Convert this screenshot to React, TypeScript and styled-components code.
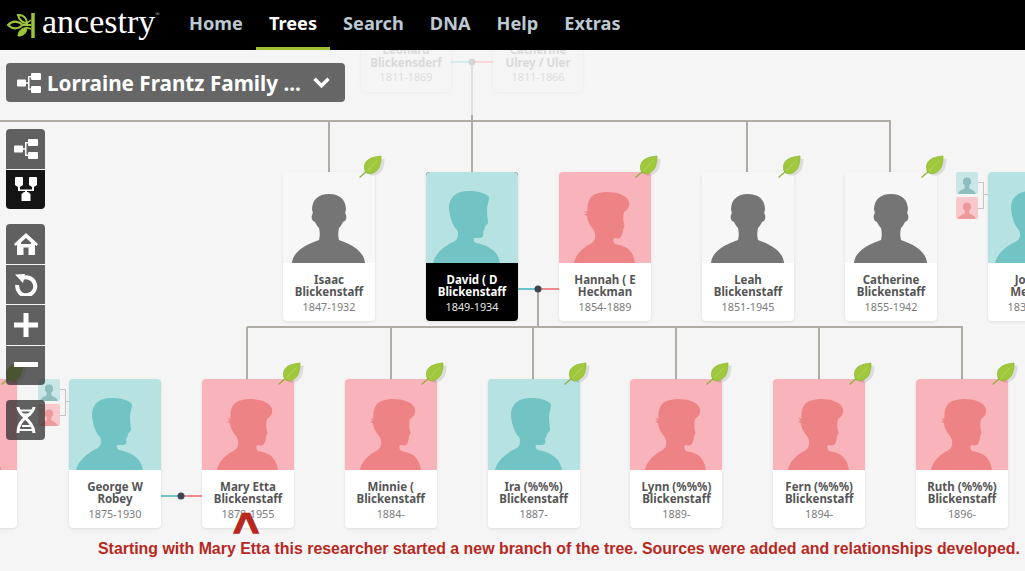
import React from "react";
import styled, { createGlobalStyle } from "styled-components";

const GlobalStyle = createGlobalStyle`
  html, body { margin: 0; padding: 0; background: #f5f5f5; }
  body { font-family: "Noto Sans", "Open Sans", sans-serif; }
`;

const Page = styled.div`
  width: 1025px;
  height: 571px;
  overflow: hidden;
  display: flex;
  flex-direction: column;
`;

// header
const Header = styled.header`
  height: 50px;
  flex: none;
  background: #000;
  display: flex;
  align-items: stretch;
  padding-left: 7px;
  position: relative;
  z-index: 5;
`;

const Logo = styled.div`
  display: flex;
  align-items: center;
  width: 169px;
  gap: 5px;
`;

const LogoWord = styled.span`
  font-family: "Liberation Serif", serif;
  font-size: 34px;
  line-height: 1;
  color: #fff;
  margin-top: -7px;
  sup {
    font-size: 6px;
    vertical-align: 17px;
    line-height: 0;
    color: #ccc;
  }
`;

const Nav = styled.nav`
  display: flex;
`;

const NavItem = styled.a<{ $active?: boolean }>`
  font-family: "Noto Sans", sans-serif;
  font-weight: 700;
  font-size: 18.2px;
  line-height: 46px;
  height: 47px;
  padding: 0 13px;
  color: ${(p) => (p.$active ? "#fff" : "#bcc8d2")};
  border-bottom: 3px solid ${(p) => (p.$active ? "#9cbe30" : "transparent")};
`;

// free canvas of the tree
const Canvas = styled.main`
  position: relative;
  flex: 1;
  overflow: hidden;
  background: #f5f5f5;
`;

const Connectors = styled.svg`
  position: absolute;
  left: 0;
  top: 0;
`;

const TreeRow = styled.div<{ $x: number; $y: number; $gap: number }>`
  position: absolute;
  left: ${(p) => p.$x}px;
  top: ${(p) => p.$y - 50}px;
  display: flex;
  gap: ${(p) => p.$gap}px;
`;

const Card = styled.div<{ $selected?: boolean; $before?: number }>`
  position: relative;
  flex: none;
  width: 92px;
  height: 149px;
  margin-left: ${(p) => p.$before ?? 0}px;
  border-radius: 4px;
  background: ${(p) => (p.$selected ? "#000" : "#fff")};
  box-shadow: 0 1px 3px rgba(0, 0, 0, 0.1);
  display: flex;
  flex-direction: column;
`;

const Photo = styled.div<{ $g: Gender }>`
  height: 91px;
  flex: none;
  display: flex;
  border-radius: 4px 4px 0 0;
  overflow: hidden;
  background: ${(p) => (p.$g === "m" ? "#b6e2e1" : p.$g === "f" ? "#f9b4bb" : "#f7f7f7")};
  svg { display: block; }
`;

const Info = styled.div<{ $selected?: boolean }>`
  flex: 1;
  padding-top: 10.5px;
  text-align: center;
  color: ${(p) => (p.$selected ? "#fff" : "#555")};
  white-space: nowrap;
`;

const Name = styled.div`
  font-family: "Noto Sans", sans-serif;
  font-weight: 700;
  font-size: 11.5px;
  line-height: 12.5px;
`;

const Years = styled.div<{ $selected?: boolean }>`
  font-family: "Noto Sans", sans-serif;
  font-size: 10.8px;
  line-height: 15px;
  color: ${(p) => (p.$selected ? "#e6e6e6" : "#7b7b7b")};
`;

const GhostCard = styled.div`
  flex: none;
  width: 90px;
  height: 52px;
  border-radius: 4px;
  background: #f5f5f5;
  box-shadow: 0 0 3px rgba(0, 0, 0, 0.06);
  text-align: center;
  color: #dadada;
  padding-top: 4px;
  box-sizing: border-box;
  white-space: nowrap;
`;

const GhostYears = styled(Years)`
  color: #dedede;
`;

const LeafMark = styled.svg`
  position: absolute;
  right: -12px;
  top: -17px;
`;

const SideParents = styled.div<{ $x: number; $y: number }>`
  position: absolute;
  left: ${(p) => p.$x}px;
  top: ${(p) => p.$y - 50}px;
  display: flex;
  align-items: center;
`;

const MiniStack = styled.div`
  display: flex;
  flex-direction: column;
  gap: 3px;
`;

const MiniParent = styled.div<{ $g: Gender }>`
  width: 22px;
  height: 22px;
  border-radius: 2px;
  overflow: hidden;
  background: ${(p) => (p.$g === "m" ? "#c8e6e6" : "#f8c8cc")};
  svg { display: block; }
`;

const Bracket = styled.div`
  position: relative;
  width: 5px;
  height: 25px;
  border: 1px solid #c4c4c0;
  border-left: none;
  &::after {
    content: "";
    position: absolute;
    left: 5px;
    top: 11px;
    width: 5px;
    height: 1px;
    background: #c4c4c0;
  }
`;

// overlay controls
const TreePicker = styled.div`
  position: absolute;
  left: 6px;
  top: 13px;
  width: 339px;
  height: 39px;
  box-sizing: border-box;
  padding: 0 15px 0 11px;
  border-radius: 4px;
  background: #666;
  color: #fff;
  display: flex;
  align-items: center;
  z-index: 3;
`;

const PickerTitle = styled.span`
  flex: 1;
  margin-left: 6px;
  font-family: "Noto Sans", sans-serif;
  font-weight: 700;
  font-size: 20.7px;
  white-space: nowrap;
`;

const Tools = styled.div`
  position: absolute;
  left: 6px;
  top: 79px;
  width: 39px;
  display: flex;
  flex-direction: column;
  z-index: 3;
`;

const ToolGroup = styled.div`
  display: flex;
  flex-direction: column;
  gap: 1px;
  margin-bottom: 15px;
  border-radius: 4px;
  overflow: hidden;
`;

const Tool = styled.button<{ $active?: boolean }>`
  width: 39px;
  height: 39.5px;
  padding: 0;
  border: none;
  display: flex;
  align-items: center;
  justify-content: center;
  background: ${(p) => (p.$active ? "#141414" : "rgba(45, 45, 45, 0.75)")};
  color: #fff;
`;

const Caret = styled.div`
  position: absolute;
  left: 233px;
  top: 456px;
  font-family: "Liberation Sans", Arial, sans-serif;
  font-weight: 700;
  font-size: 45px;
  line-height: 45px;
  color: #b8281e;
  -webkit-text-stroke: 1.5px #b8281e;
  z-index: 2;
`;

const Caption = styled.div`
  position: absolute;
  left: 98px;
  top: 490px;
  font-family: "Liberation Sans", Arial, sans-serif;
  font-weight: 700;
  font-size: 15.9px;
  line-height: 18px;
  color: #b8281e;
  white-space: nowrap;
  z-index: 2;
`;

type Gender = "m" | "f" | "u";

const MALE =
  "M7 91C9 82 18 74 29 69C32 67 33 62 31 58C26 53 23 43 23 34C24 24 32 19 42 19C50 19 58 20 63 25C63 30 61 33 61 38C61 44 62 48 62 51C61 53 59 54 59 55C59 57 58 58 57 60C58 64 57 66 53 66L48 66C47 68 48 70 50 71C57 72 64 75 69 80C72 83 73 87 74 91Z";
const FEMALE =
  "M15 91C16 85 20 79 29 73C34 71 37 68 36 62C36 59 33 56 31 53C29 50 28 46 28 44L25 42.500L28 41.500L25 39.500L28.500 39.500C28 34 29 28 33 24C37 21 43 20 48 20C58 20 68 23 70 30C71 35 68 38 65 40C64 44 64 48 65 52C66 54 65 56 64 57C64 60 63 64 61 66C59 67 57 66 55 66C54 68 54 70 56 72C62 73 68 75 71 79C74 82 75 86 76 91Z";
const UNKNOWN =
  "M9 91C10 81 19 74 36 68C37 64 37 60 36 56C34 54 33 52 32 50C29 49 28 46 29 43C30 41 30 40 29 38C29 28 35 22 46 22C57 22 63 28 63 38C62 40 62 41 63 43C64 46 63 49 60 50C59 52 58 54 56 56C55 60 55 64 56 68C73 74 81 81 82 91Z";

const Silhouette = ({ g }: { g: Gender }) => (
  <svg width={92} height={91} viewBox="0 0 92 91">
    <path
      d={g === "m" ? MALE : g === "f" ? FEMALE : UNKNOWN}
      fill={g === "m" ? "#72c3c3" : g === "f" ? "#ee8385" : "#757575"}
    />
  </svg>
);

const MiniSilhouette = ({ g }: { g: Gender }) => (
  <svg width="22" height="22" viewBox="0 0 92 91">
    <path d={UNKNOWN} fill={g === "m" ? "#8fbcbc" : "#ee9a9c"} />
  </svg>
);

const Leaf = () => (
  <LeafMark width="28" height="25" viewBox="0 0 28 25">
    <path d="M23 2C14 2.500 7 4 6 11C5.500 15 7 18 9 19C15 20 21 16 22 10C23 7 23 4 23 2Z" fill="#000" opacity="0.1" transform="translate(2.500 1.500)" />
    <path d="M22 1C13 2 6.500 4 5.500 11C5 15 6.500 17.500 8.500 18.500C14.500 19.500 20 15.500 21 9.500C22 6.500 22 4 22 1Z" fill="#a0c83c" stroke="#8cb82c" strokeWidth="0.7" />
    <path d="M8.500 16C12 12 15 8.500 18.500 5.500" stroke="#b8da68" strokeWidth="0.8" fill="none" />
    <path d="M0.500 22.500L7.500 16.500" stroke="#8fb23a" strokeWidth="1.300" fill="none" />
  </LeafMark>
);

const NetworkIcon = () => (
  <svg width="24" height="20" viewBox="0 0 24 20" fill="#fff">
    <rect x="0" y="6.500" width="9" height="7" rx="1" />
    <rect x="14" y="0" width="10" height="7" rx="1" />
    <rect x="14" y="13" width="10" height="7" rx="1" />
    <path d="M9 9.200H11V3H14V4.400H12.500V15.600H14V17H11V10.800H9Z" />
  </svg>
);

const PedigreeIcon = () => (
  <svg width="22" height="24" viewBox="0 0 22 24" fill="#fff">
    <path d="M1 0H7A1 1 0 0 1 8 1V8L5 10H3L0 8V1A1 1 0 0 1 1 0Z" />
    <path d="M15 0H21A1 1 0 0 1 22 1V8L19 10H17L14 8V1A1 1 0 0 1 15 0Z" />
    <path d="M9 15H13L15.500 17V24H6.500V17Z" />
    <path d="M3 10H5V12.500H17V10H19V14H12V15H10V14H3Z" />
  </svg>
);

const HomeIcon = () => (
  <svg width="24" height="22" viewBox="0 0 24 22" fill="#fff">
    <path d="M12 0L24 11L22.500 13L21 11.700V22H14.500V14.500H9.500V22H3V11.700L1.500 13L0 11L12 0ZM12 5L7 9.500V11H17V9.500Z" fillRule="evenodd" />
  </svg>
);

const ResetIcon = () => (
  <svg width="24" height="24" viewBox="0 0 24 24" fill="none" stroke="#fff" strokeWidth="4">
    <path d="M7 7A9 9 0 1 1 3.300 13" />
    <path d="M1 2.500L11 2L9 11Z" fill="#fff" stroke="none" />
  </svg>
);

const PlusIcon = () => (
  <svg width="24" height="24" viewBox="0 0 24 24" fill="#fff">
    <path d="M9.500 0H14.500V9.500H24V14.500H14.500V24H9.500V14.500H0V9.500H9.500Z" />
  </svg>
);

const MinusIcon = () => (
  <svg width="24" height="6" viewBox="0 0 24 6" fill="#fff">
    <rect width="24" height="5" />
  </svg>
);

const DnaIcon = () => (
  <svg width="20" height="26" viewBox="0 0 20 26" fill="none" stroke="#fff">
    <path d="M2 0C2 9 17 12 18 26" strokeWidth="3" />
    <path d="M18 0C18 6 9 10 6 14C3.500 17 2 21 2 26" strokeWidth="3" />
    <path d="M3 3.500H17M5 7.500H15M6 19H15M3 23H17" strokeWidth="1.800" />
  </svg>
);

const ChevronIcon = () => (
  <svg width="17" height="11" viewBox="0 0 17 11" fill="none" stroke="#fff" strokeWidth="3.400">
    <path d="M1.500 1.800L8.500 8.800L15.500 1.800" />
  </svg>
);

const LogoMark = () => (
  <svg width="30" height="25" viewBox="0 0 30 25" fill="none" stroke="#9cc53a">
    <path d="M26 0V25" strokeWidth="3.500" />
    <path d="M1 12C6 7 11 8 16 12C11 16 6 17 1 12Z" strokeWidth="2" />
    <path d="M16 12H24" strokeWidth="2" />
    <path d="M11 2C16 1.500 20 5 20 10C16 10.500 12 7 11 2Z" strokeWidth="2" />
    <path d="M11 23C11 18 15 14.500 20 14.500C20 20 16 23.500 11 23Z" fill="#9cc53a" strokeWidth="1" />
    <path d="M20 10L24 7M20 14.500L24 16" strokeWidth="1.500" />
  </svg>
);

type Person = { g: Gender; name: [string, string]; years: string; leaf?: boolean; selected?: boolean; before?: number };

const children: Person[] = [
  { g: "u", name: ["Isaac", "Blickenstaff"], years: "1847-1932", leaf: true },
  { g: "m", name: ["David ( D", "Blickenstaff"], years: "1849-1934", selected: true },
  { g: "f", name: ["Hannah ( E", "Heckman"], years: "1854-1889", leaf: true, before: -10 },
  { g: "u", name: ["Leah", "Blickenstaff"], years: "1851-1945", leaf: true },
  { g: "u", name: ["Catherine", "Blickenstaff"], years: "1855-1942", leaf: true },
  { g: "m", name: ["Joseph", "Metzger"], years: "1832-1901" },
];

const grandchildren: Person[] = [
  { g: "f", name: ["", ""], years: "", leaf: true },
  { g: "m", name: ["George W", "Robey"], years: "1875-1930", before: 1.2 },
  { g: "f", name: ["Mary Etta", "Blickenstaff"], years: "1878-1955", leaf: true, before: -9.8 },
  { g: "f", name: ["Minnie (", "Blickenstaff"], years: "1884-", leaf: true },
  { g: "m", name: ["Ira (%%%)", "Blickenstaff"], years: "1887-", leaf: true },
  { g: "f", name: ["Lynn (%%%)", "Blickenstaff"], years: "1889-", leaf: true },
  { g: "f", name: ["Fern (%%%)", "Blickenstaff"], years: "1894-", leaf: true },
  { g: "f", name: ["Ruth (%%%)", "Blickenstaff"], years: "1896-", leaf: true },
];

const navItems = ["Home", "Trees", "Search", "DNA", "Help", "Extras"];

const PersonCard = ({ p }: { p: Person }) => (
  <Card $selected={p.selected} $before={p.before}>
    <Photo $g={p.g}><Silhouette g={p.g} /></Photo>
    <Info $selected={p.selected}>
      <Name>{p.name[0]}</Name>
      <Name>{p.name[1]}</Name>
      <Years $selected={p.selected}>{p.years}</Years>
    </Info>
    {p.leaf && <Leaf />}
  </Card>
);

const SideParentsPair = ({ x, y }: { x: number; y: number }) => (
  <SideParents $x={x} $y={y}>
    <MiniStack>
      <MiniParent $g="m"><MiniSilhouette g="m" /></MiniParent>
      <MiniParent $g="f"><MiniSilhouette g="f" /></MiniParent>
    </MiniStack>
    <Bracket />
  </SideParents>
);

// all connector lines, in canvas coordinates (page y minus 50)
const TreeLines = () => (
  <Connectors width="1025" height="521" fill="none" strokeWidth="2">
    <g stroke="#dedede">
      <path d="M472 12V65" />
    </g>
    <path d="M451 12H472" stroke="#d4ecec" />
    <path d="M472 12H493" stroke="#f8d8da" />
    <circle cx="472" cy="12" r="3.500" fill="#d4d6d6" stroke="none" />

    <g stroke="#aeaca4">
      <path d="M0 71H891" />
      <path d="M329 71V122M472 65V122M747 71V122M890 71V122" />
      <path d="M538 239V277" />
      <path d="M247 277H963" />
      <path d="M247 277V329M391 277V329M533 277V329M676 277V329M819 277V329M962 277V329" />
    </g>

    <path d="M518 239H538" stroke="#6cc4c8" />
    <path d="M538 239H559" stroke="#f08a8c" />
    <circle cx="538" cy="239" r="3.500" fill="#3c4650" stroke="none" />

    <path d="M161 446H181" stroke="#6cc4c8" />
    <path d="M181 446H202" stroke="#f08a8c" />
    <circle cx="181" cy="446" r="3.500" fill="#3c4650" stroke="none" />
  </Connectors>
);

export default function App() {
  return (
    <Page>
      <GlobalStyle />
      <Header>
        <Logo>
          <LogoMark />
          <LogoWord>ancestry<sup>®</sup></LogoWord>
        </Logo>
        <Nav>
          {navItems.map((n) => (
            <NavItem key={n} $active={n === "Trees"}>{n}</NavItem>
          ))}
        </Nav>
      </Header>

      <Canvas>
        <TreeLines />

        <TreeRow $x={361} $y={40} $gap={42}>
          <GhostCard>
            <Name>Leonard</Name>
            <Name>Blickensderf</Name>
            <GhostYears>1811-1869</GhostYears>
          </GhostCard>
          <GhostCard>
            <Name>Catherine</Name>
            <Name>Ulrey / Uler</Name>
            <GhostYears>1811-1866</GhostYears>
          </GhostCard>
        </TreeRow>

        <TreeRow $x={283} $y={172} $gap={51}>
          {children.map((p) => <PersonCard key={p.years} p={p} />)}
        </TreeRow>

        <TreeRow $x={-75} $y={379} $gap={50.8}>
          {grandchildren.map((p) => <PersonCard key={p.years} p={p} />)}
        </TreeRow>

        <SideParentsPair x={956} y={172} />
        <SideParentsPair x={38} y={379} />

        <TreePicker>
          <NetworkIcon />
          <PickerTitle>Lorraine Frantz Family ...</PickerTitle>
          <ChevronIcon />
        </TreePicker>

        <Tools>
          <ToolGroup>
            <Tool><NetworkIcon /></Tool>
            <Tool $active><PedigreeIcon /></Tool>
          </ToolGroup>
          <ToolGroup>
            <Tool><HomeIcon /></Tool>
            <Tool><ResetIcon /></Tool>
            <Tool><PlusIcon /></Tool>
            <Tool><MinusIcon /></Tool>
          </ToolGroup>
          <ToolGroup>
            <Tool><DnaIcon /></Tool>
          </ToolGroup>
        </Tools>

        <Caret>^</Caret>
        <Caption>Starting with Mary Etta this researcher started a new branch of the tree. Sources were added and relationships developed.</Caption>
      </Canvas>
    </Page>
  );
}
